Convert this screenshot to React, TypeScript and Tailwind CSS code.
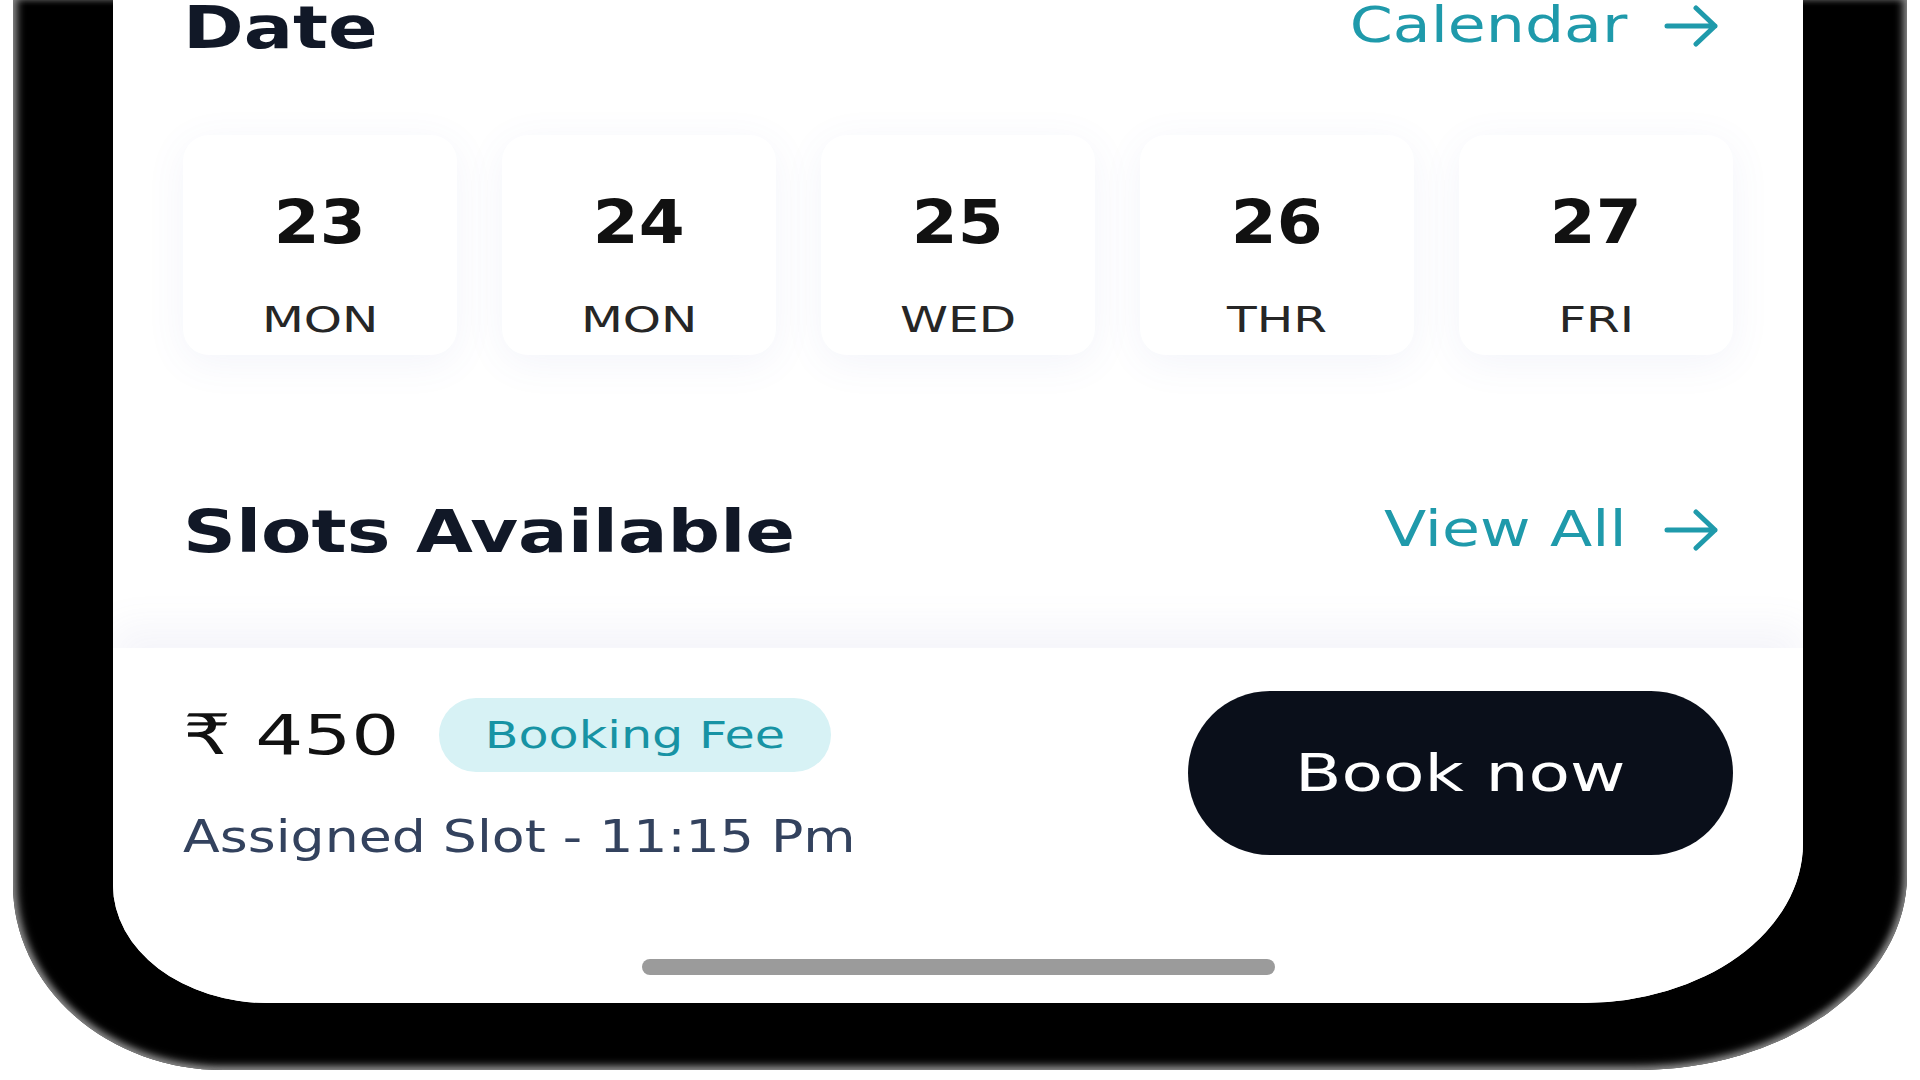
const font = "font-['DejaVu_Sans',sans-serif]";

const days = [
  { day: "23", name: "MON" },
  { day: "24", name: "MON" },
  { day: "25", name: "WED" },
  { day: "26", name: "THR" },
  { day: "27", name: "FRI" },
];

const Arrow = () => (
  <svg width="55" height="42" viewBox="0 0 55 42" fill="none" stroke="currentColor" strokeWidth="5" strokeLinecap="round" strokeLinejoin="round">
    <path d="M3 21H51M32 3l19 18-19 18" />
  </svg>
);

const SectionLink = ({ label }: { label: string }) => (
  <div className="flex items-center h-[52px] gap-[37px] mr-[14px] text-[#1f9aab]">
    <span className="inline-block origin-right scale-x-[1.26] text-[49px] leading-[52px]">{label}</span>
    <Arrow />
  </div>
);

const DateCard = ({ day, name }: { day: string; name: string }) => (
  <div className="w-[274px] h-[220px] rounded-[26px] bg-white shadow-[0_8px_40px_rgba(90,100,180,0.07)] flex flex-col items-center pt-[57px]">
    <span className="inline-block scale-x-[1.1] text-[60px] leading-none font-bold text-[#111111]">{day}</span>
    <span className="inline-block scale-x-[1.35] mt-[50px] text-[36px] leading-none text-[#262626]">{name}</span>
  </div>
);

export default function App() {
  return (
    <div className={`w-[1920px] h-[1080px] overflow-hidden bg-white ${font}`}>
      <div className="ml-[13px] w-[1894px] h-[1070px] bg-black rounded-bl-[210px_185px] rounded-br-[270px_195px] pl-[100px] pr-[104px] pb-[67px] shadow-[inset_7px_0_8px_-3px_#8c8c8c,inset_-7px_0_8px_-3px_#8c8c8c,inset_0_-7px_8px_-3px_#8c8c8c]">
        <div className="h-full bg-white overflow-hidden rounded-bl-[155px_118px] rounded-br-[220px_160px] flex flex-col">
          <div className="flex-1 px-[70px]">
            <div className="flex items-start justify-between">
              <h2 className="inline-block origin-left scale-x-[1.24] text-[59px] leading-[55px] font-bold text-[#111827]">Date</h2>
              <SectionLink label="Calendar" />
            </div>

            <div className="mt-[80px] flex justify-between">
              {days.map((d) => (
                <DateCard key={d.day} day={d.day} name={d.name} />
              ))}
            </div>

            <div className="mt-[149px] flex items-start justify-between">
              <h2 className="inline-block origin-left scale-x-[1.245] text-[59px] leading-[55px] font-bold text-[#111827]">Slots Available</h2>
              <SectionLink label="View All" />
            </div>
          </div>

          <div className="h-[355px] bg-white shadow-[0_-22px_36px_rgba(110,120,190,0.07)]">
            <div className="flex items-start justify-between px-[70px] pt-[43px]">
              <div className="mt-[7px] flex flex-col">
                <div className="flex items-center h-[74px]">
                  <span className="inline-block origin-left scale-x-[1.35] text-[56px] leading-none text-[#111111]">₹ 450</span>
                  <div className="ml-[96px] w-[392px] h-[74px] rounded-full bg-[#d7f2f5] flex items-center justify-center">
                    <span className="inline-block scale-x-[1.33] text-[37px] leading-none text-[#1793a4]">Booking Fee</span>
                  </div>
                </div>
                <span className="self-start inline-block origin-left scale-x-[1.22] mt-[43px] text-[44px] leading-none text-[#33425e]">Assigned Slot - 11:15 Pm</span>
              </div>
              <button className="w-[545px] h-[164px] rounded-full bg-[#0a0f1a] flex items-center justify-center">
                <span className="inline-block scale-x-[1.33] text-[51px] leading-none text-white">Book now</span>
              </button>
            </div>
            <div className="mx-auto mt-[100px] w-[633px] h-[16px] rounded-full bg-[#9b9b9b]" />
          </div>
        </div>
      </div>
    </div>
  );
}
